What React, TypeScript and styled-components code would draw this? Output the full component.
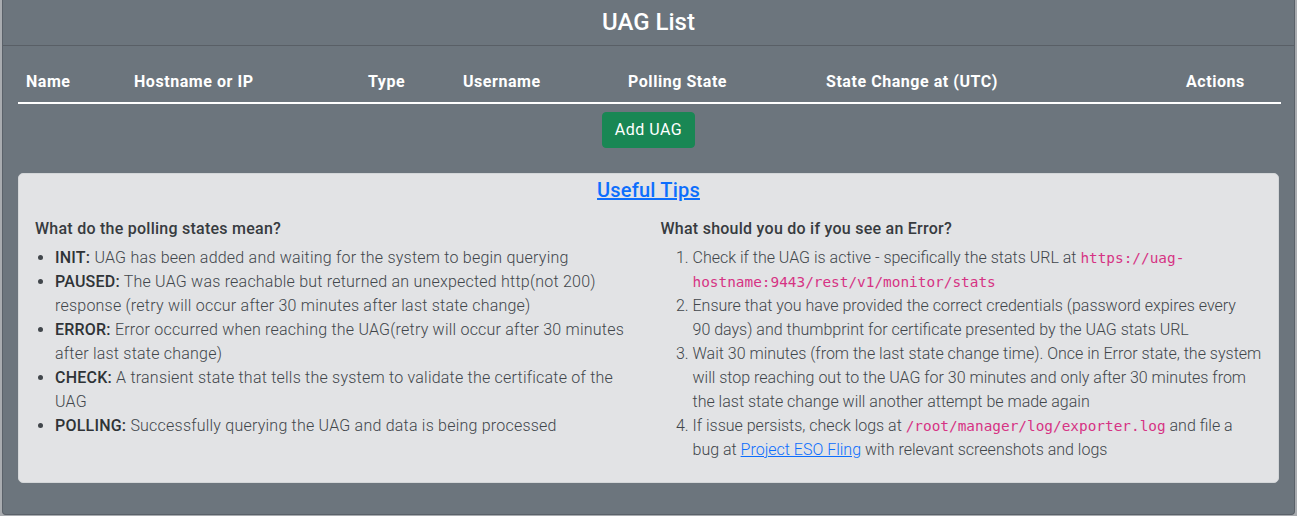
import React from "react";
import styled, { createGlobalStyle } from "styled-components";

const Global = createGlobalStyle`
  html, body { margin: 0; padding: 0; }
  body {
    background: #a9acb0;
    font-family: Roboto, "Noto Sans", "Liberation Sans", sans-serif;
    font-size: 16px;
    line-height: 1.5;
    color: #212529;
  }
  * { box-sizing: border-box; }
`;

const Page = styled.div`
  padding: 0 2px 1px 2px;
`;

const Card = styled.section`
  background: #6c757d;
  border: 1px solid #5a6169;
  border-top: none;
  border-radius: 0 0 4px 4px;
  height: 515px;
  display: flex;
  flex-direction: column;
`;

const CardHeader = styled.header`
  padding: 8px 16px;
  border-bottom: 1px solid #595f66;
  text-align: center;
`;

const Title = styled.h4`
  margin: 0;
  font-size: 24px;
  font-weight: 500;
  line-height: 28.8px;
  color: #fff;
`;

const CardBody = styled.div`
  padding: 16px 15px 16px 15px;
  display: flex;
  flex-direction: column;
`;

const Table = styled.table`
  width: 100%;
  border-collapse: collapse;
  table-layout: fixed;
  color: #fff;
`;

const Th = styled.th<{ $w: number }>`
  width: ${(p) => p.$w}px;
  text-align: left;
  font-weight: 700;
  font-size: 16px;
  line-height: 24px;
  letter-spacing: 0.55px;
  padding: 8px;
  border-bottom: 2px solid #fff;
  white-space: nowrap;
`;

const ButtonRow = styled.div`
  display: flex;
  justify-content: center;
  margin-top: 8px;
`;

const AddButton = styled.button`
  background: #198754;
  color: #fff;
  border: 1px solid #198754;
  border-radius: 4px;
  font-family: inherit;
  font-size: 16px;
  line-height: 24px;
  letter-spacing: 0.5px;
  padding: 5px 12px;
  cursor: pointer;
`;

const Tips = styled.div`
  margin-top: 25px;
  background: #e2e3e5;
  border: 1px solid #d3d6d8;
  border-radius: 5px;
  color: #41464b;
  padding: 4px 16px 4px;
`;

const TipsTitle = styled.h5`
  margin: 0 0 17px;
  text-align: center;
  font-size: 20px;
  line-height: 24px;
  font-weight: 500;
  letter-spacing: 0.2px;
`;

const TipsLink = styled.a`
  color: #0d6efd;
  text-decoration: underline;
`;

const Row = styled.div`
  display: grid;
  grid-template-columns: 1fr 1fr;
  margin: 0 -12px;
`;

const Col = styled.div`
  padding: 0 12px;
`;

const SubHeading = styled.h6`
  margin: 0 0 8px;
  font-size: 16px;
  line-height: 19.2px;
  font-weight: 500;
  letter-spacing: 0.25px;
  color: #373b3f;
`;

const BulletList = styled.ul`
  margin: 0 0 16px;
  padding-left: 20px;
  font-weight: 300;
  line-height: 24px;
  letter-spacing: 0.22px;
`;

const NumberList = styled.ol`
  margin: 0 0 16px;
  padding-left: 32px;
  font-weight: 300;
  line-height: 24px;
  letter-spacing: 0;
`;

const Strong = styled.b`
  font-weight: 500;
  color: #2f3337;
`;

const Code = styled.code`
  font-family: "DejaVu Sans Mono", "Liberation Mono", monospace;
  font-size: 14.4px;
  letter-spacing: 0;
  color: #d63384;
  font-weight: 400;
  word-wrap: break-word;
`;

const columns: [string, number][] = [
  ["Name", 108],
  ["Hostname or IP", 234],
  ["Type", 95],
  ["Username", 165],
  ["Polling State", 198],
  ["State Change at (UTC)", 360],
  ["Actions", 103],
];

const states: [string, string][] = [
  ["INIT:", "UAG has been added and waiting for the system to begin querying"],
  [
    "PAUSED:",
    "The UAG was reachable but returned an unexpected http(not 200) response (retry will occur after 30 minutes after last state change)",
  ],
  [
    "ERROR:",
    "Error occurred when reaching the UAG(retry will occur after 30 minutes after last state change)",
  ],
  ["CHECK:", "A transient state that tells the system to validate the certificate of the UAG"],
  ["POLLING:", "Successfully querying the UAG and data is being processed"],
];

export default function App() {
  return (
    <Page>
      <Global />
      <Card>
        <CardHeader>
          <Title>UAG List</Title>
        </CardHeader>
        <CardBody>
          <Table>
            <thead>
              <tr>
                {columns.map(([label, w]) => (
                  <Th key={label} $w={w}>
                    {label}
                  </Th>
                ))}
              </tr>
            </thead>
          </Table>
          <ButtonRow>
            <AddButton>Add UAG</AddButton>
          </ButtonRow>
          <Tips>
            <TipsTitle>
              <TipsLink href="#">Useful Tips</TipsLink>
            </TipsTitle>
            <Row>
              <Col>
                <SubHeading>What do the polling states mean?</SubHeading>
                <BulletList>
                  {states.map(([k, v]) => (
                    <li key={k}>
                      <Strong>{k}</Strong> {v}
                    </li>
                  ))}
                </BulletList>
              </Col>
              <Col>
                <SubHeading>What should you do if you see an Error?</SubHeading>
                <NumberList>
                  <li>
                    Check if the UAG is active - specifically the stats URL at{" "}
                    <Code>https://uag-hostname:9443/rest/v1/monitor/stats</Code>
                  </li>
                  <li>
                    Ensure that you have provided the correct credentials (password expires every
                    <br />
                    90 days) and thumbprint for certificate presented by the UAG stats URL
                  </li>
                  <li>
                    Wait 30 minutes (from the last state change time). Once in Error state, the
                    system will stop reaching out to the UAG for 30 minutes and only after 30
                    minutes from the last state change will another attempt be made again
                  </li>
                  <li>
                    If issue persists, check logs at <Code>/root/manager/log/exporter.log</Code>{" "}
                    and file a bug at <TipsLink href="#">Project ESO Fling</TipsLink> with relevant
                    screenshots and logs
                  </li>
                </NumberList>
              </Col>
            </Row>
          </Tips>
        </CardBody>
      </Card>
    </Page>
  );
}
